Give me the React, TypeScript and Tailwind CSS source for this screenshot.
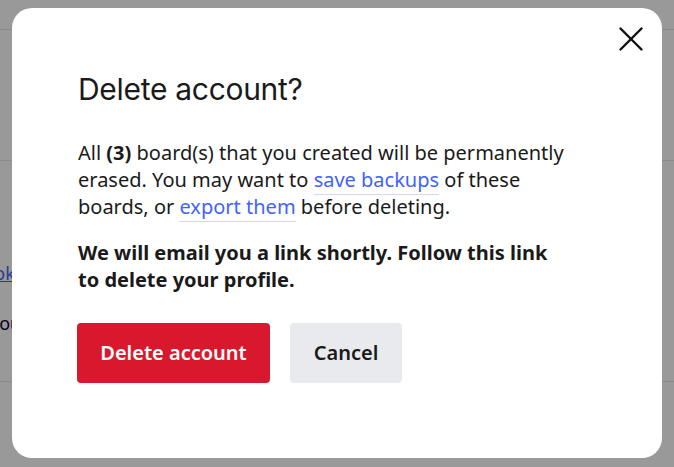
import { X } from "lucide-react";

export default function App() {
  return (
    <main className="relative h-[467px] w-[674px] overflow-hidden bg-white font-['Noto_Sans',sans-serif]">
      {/* page behind the dialog */}
      <div className="flex h-full flex-col">
        <div className="h-[30px] border-b border-[#e8e8e8]" />
        <div className="h-[131px] border-b border-[#e8e8e8]" />
        <div className="flex flex-1 flex-col border-b border-[#e8e8e8] pt-[99px]">
          <a className="-ml-[26px] w-fit text-[18px] leading-[26px] text-[#4262ff] underline">
            Look
          </a>
          <p className="-ml-[10px] mt-[24px] text-[18px] leading-[26px] text-[#050038]">
            you
          </p>
        </div>
        <div className="h-[85px]" />
      </div>

      {/* overlay */}
      <div className="absolute inset-0 bg-black/40">
        <div className="absolute left-[12px] top-[8px] h-[450px] w-[650px] rounded-[20px] bg-white">
          <button className="absolute right-[10px] top-[10px] flex h-[42px] w-[42px] items-center justify-center text-[#111111]">
            <X size={42} strokeWidth={1.4} />
          </button>

          <div className="flex flex-col pl-[66px] pt-[61px]">
            <h2 className="font-['Inter',sans-serif] text-[30px] font-normal leading-[40px] tracking-[-0.3px] text-[#1a1a1a]">
              Delete account?
            </h2>

            <p className="mt-[30px] w-[490px] text-[20px] leading-[27px] text-[#1a1a1a]">
              All <strong className="font-bold">(3)</strong> board(s) that you
              created will be permanently erased. You may want to{" "}
              <a className="border-b border-[#d3d7f3] pb-[1px] text-[#4262ff]">
                save backups
              </a>{" "}
              of these boards, or{" "}
              <a className="border-b border-[#d3d7f3] pb-[1px] text-[#4262ff]">
                export them
              </a>{" "}
              before deleting.
            </p>

            <p className="mt-[19px] w-[490px] text-[20px] font-bold leading-[27px] text-[#1a1a1a]">
              We will email you a link shortly. Follow this link to delete your
              profile.
            </p>

            <div className="mt-[30px] flex gap-[20px]">
              <button className="h-[60px] w-[193px] -ml-px rounded-[4px] bg-[#d9182e] text-[20px] font-semibold text-white">
                Delete account
              </button>
              <button className="h-[60px] w-[112px] rounded-[4px] bg-[#e9eaee] text-[20px] font-semibold text-[#1a1a1a]">
                Cancel
              </button>
            </div>
          </div>
        </div>
      </div>
    </main>
  );
}
